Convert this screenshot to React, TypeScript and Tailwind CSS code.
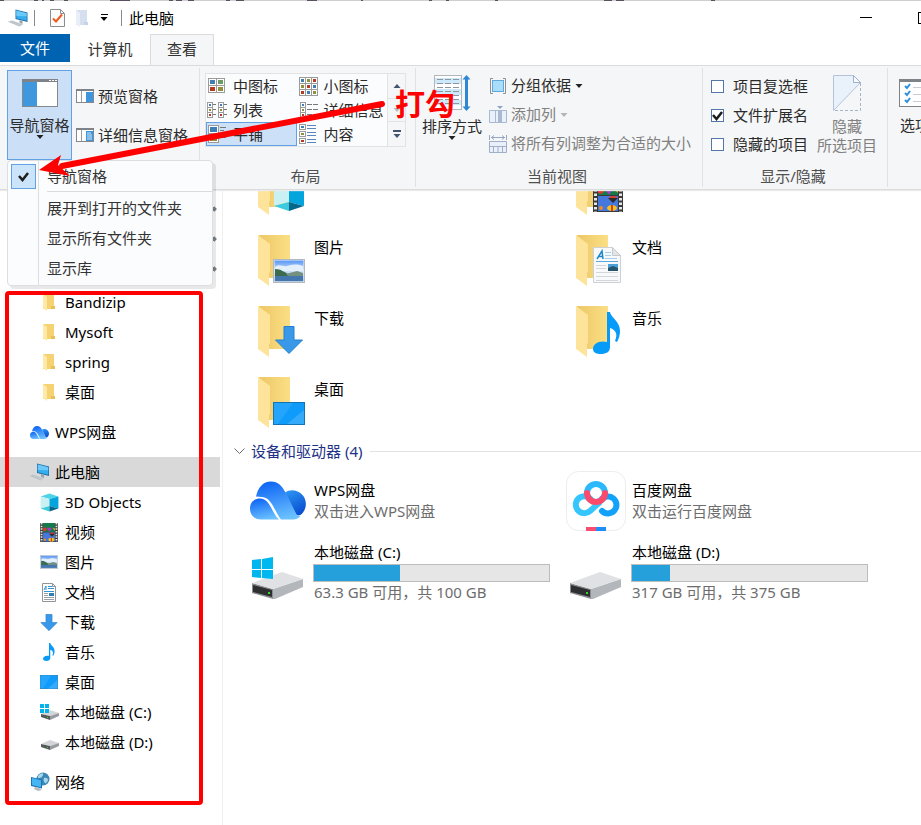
import type { ReactNode } from "react";

const FONT = "font-['Noto_Sans','Noto_Sans_CJK_SC',sans-serif]";

/* ---------- small icons ---------- */

function PcIcon({ className = "h-5 w-5" }: { className?: string }) {
  return (
    <svg viewBox="0 0 20 20" className={className} aria-hidden="true">
      <path d="M7 1.500l12 3v9.500L7 11z" fill="#1f6fa8" />
      <path d="M7.800 2.500l10.400 2.700v7.500L7.800 10.200z" fill="#35aef0" />
      <path d="M7.800 2.500l10.400 2.700v3L7.800 8z" fill="#6cc8f8" />
      <path d="M11 12l3 1v3l-3-1z" fill="#9aa3ab" />
      <path d="M0 13.500l4-1 11 4-4 2z" fill="#cfd5da" />
      <path d="M0 13.500l11 4.500M2 13l11 4" stroke="#aab2b9" strokeWidth="0.700" />
    </svg>
  );
}

function SmallFolder({ pale = false }: { pale?: boolean }) {
  return (
    <svg viewBox="0 0 18 18" className="h-[18px] w-[18px]" aria-hidden="true">
      <path d="M3 1h11v15H3z" fill={pale ? "#d5dfee" : "#f5d373"} />
      <path d="M11 13h4v3h-4z" fill={pale ? "#c6d3e8" : "#e8c05a"} />
      <path d="M3 1l4 3v14l-4-3z" fill={pale ? "#e9eff8" : "#ffe9a6"} />
    </svg>
  );
}

function WpsCloud({ className }: { className: string }) {
  return (
    <svg viewBox="0 0 56 38" className={className} aria-hidden="true">
      <defs>
        <linearGradient id="wpsA" x1="0.3" y1="0" x2="0.6" y2="1">
          <stop offset="0" stopColor="#0f66f5" />
          <stop offset="1" stopColor="#6cc2ff" />
        </linearGradient>
        <linearGradient id="wpsB" x1="0" y1="0" x2="0.5" y2="1">
          <stop offset="0" stopColor="#2f9bf5" />
          <stop offset="1" stopColor="#0a50d2" />
        </linearGradient>
      </defs>
      <path d="M35 11C41 7 48 9 52 13c5 5 5 13 1 18-2 3-5 4-7 2z" fill="url(#wpsB)" />
      <path d="M6 15C8 6 13 0 21 0c7 0 11 4 15 12l10 20c2 3 4 4 6 1-3 4-6 5-9 5H31C25 31 22 16 12 15.500z" fill="url(#wpsA)" />
      <path d="M0 27c0-6 4-10 10-10 10 0 12 15 19 21H11C4 38 0 33 0 27z" fill="url(#wpsA)" />
    </svg>
  );
}

function CubeIcon({ className = "h-[18px] w-[18px]" }: { className?: string }) {
  return (
    <svg viewBox="0 0 32 32" className={className} aria-hidden="true">
      <path d="M1 6L16 1l15 5-15 4z" fill="#4fd3e6" />
      <path d="M1 6l15 4v12L1 26z" fill="#c9f0f3" />
      <path d="M31 6l-15 4v12l15 4z" fill="#04a4dc" />
      <path d="M1 26l15-4v9z" fill="#3ccbdd" />
      <path d="M31 26l-15-4v9z" fill="#04678c" />
    </svg>
  );
}

function FilmIcon({ className = "h-[19px] w-[18px]" }: { className?: string }) {
  return (
    <svg viewBox="0 0 30 32" className={className} aria-hidden="true">
      <rect width="30" height="32" fill="#3a3a3a" />
      <rect x="5" width="20" height="15" fill="#157a4a" />
      <rect x="5" y="16" width="20" height="15" fill="#4478dc" />
      <path d="M5 8h6v4l-3 2-3-1z" fill="#d53a2a" />
      <path d="M11 8h9l-4 7z" fill="#a33ac4" />
      <path d="M21 9h4v4z" fill="#f0a51c" />
      <ellipse cx="20" cy="18" rx="4" ry="2" fill="#e33b26" />
      <path d="M15 18h10l-5 5z" fill="#2b2b2b" />
      <ellipse cx="19" cy="28" rx="5" ry="3" fill="#f6c21c" />
      <path d="M18 25h2v6h-2z" fill="#dc3a22" />
      <ellipse cx="8" cy="28" rx="2" ry="2" fill="#f08a1c" />
      <path d="M2.500 0v32M27.500 0v32" stroke="#e6e6e6" strokeWidth="3" strokeDasharray="2.500 2" />
    </svg>
  );
}

function PhotoIcon({ className }: { className: string }) {
  return (
    <svg viewBox="0 0 32 24" preserveAspectRatio="none" className={className} aria-hidden="true">
      <defs>
        <linearGradient id="sky" x1="0" y1="0" x2="0" y2="1">
          <stop offset="0" stopColor="#5a97f5" />
          <stop offset="0.5" stopColor="#cfe3fa" />
          <stop offset="1" stopColor="#7fa5cf" />
        </linearGradient>
      </defs>
      <rect x="0.500" y="0.500" width="31" height="23" fill="#eef1f4" stroke="#b3b9c0" />
      <rect x="1.500" y="1.500" width="29" height="21" fill="url(#sky)" />
      <path d="M2 8c4-4 8 0 12-1s8-3 16 0v5H2z" fill="#e3effb" />
      <path d="M2 10c6 0 9 3 15 6h13v2H2z" fill="#3c6b4e" />
      <path d="M13 15l11-3 6 2v3H15z" fill="#74907f" />
      <path d="M2 17h28v5H2z" fill="#4377ad" />
    </svg>
  );
}

/* Folder badge version: soft outline and a thumbnail. */
function DocIcon({ className }: { className: string }) {
  return (
    <svg viewBox="0 0 28 36" className={className} aria-hidden="true">
      <path d="M0.500 0.500h19l8 8v27H0.500z" fill="#f8f9fa" stroke="#cdd1d5" />
      <path d="M19.500 0.500v8h8z" fill="#e2e5e8" stroke="#c5c9cd" />
      <path d="M4 12L9 4l1 8M5.500 9.500H10" fill="none" stroke="#1b87c9" strokeWidth="1.500" />
      <path d="M12 5.500h6M12 8.500h6M12 11.500h12" stroke="#a3d0ec" />
      <path d="M3 14.500h22" stroke="#5aa9dd" />
      <path d="M3 18.500h10M3 21.500h10M3 25.500h22M3 29.500h22M3 33.500h22" stroke="#d3d7da" />
      <rect x="15" y="17" width="10" height="7" fill="#4ba0d8" />
      <path d="M15 21l5-2 5 2v3H15z" fill="#25566b" />
    </svg>
  );
}

function SmallDoc() {
  return (
    <svg viewBox="0 0 18 19" className="h-[19px] w-[18px]" aria-hidden="true">
      <path d="M2.500 0.500h10l3 3v15h-13z" fill="#fff" stroke="#8f959b" />
      <path d="M12.500 0.500v3h3" fill="none" stroke="#8f959b" />
      <path d="M4 7l2-4v4M8 3.500h4M8 5.500h6M4 8.500h10" fill="none" stroke="#2f93d4" />
      <path d="M4 10.500h4M4 12.500h4M4 14.500h10M4 16.500h10" stroke="#9aa0a6" />
      <rect x="9" y="10" width="5" height="3" fill="#2d7fb3" />
    </svg>
  );
}

function ArrowDownIcon({ className }: { className: string }) {
  return (
    <svg viewBox="0 0 28 28" className={className} aria-hidden="true">
      <path d="M9 0.500h10V14h8.500L14 27.500 0.500 14H9z" fill="#3a98e8" stroke="#2480cf" />
    </svg>
  );
}

function NoteIcon({ className = "h-[18px] w-[18px]" }: { className?: string }) {
  return (
    <svg viewBox="0 0 28 42" className={className} aria-hidden="true">
      <path
        d="M14 0h3c1 6 10 9 10 19 0 4-1 7-3 11l-2-1c3-7 1-11-5-13v19c0 5-4 7-9 7-4 0-8-1-8-5 0-5 6-9 14-7z"
        fill="#069bf8"
      />
    </svg>
  );
}

function DesktopIcon({ className }: { className: string }) {
  return (
    <svg viewBox="0 0 32 23" preserveAspectRatio="none" className={className} aria-hidden="true">
      <rect x="0.500" y="0.500" width="31" height="22" fill="#0f9bfa" stroke="#1273b5" />
      <path d="M1 1h19L5 22H1z" fill="#24a5fb" />
      <path d="M31 8v14H14z" fill="#34aafb" />
    </svg>
  );
}

function DriveIcon({ className, windows = false }: { className: string; windows?: boolean }) {
  return (
    <svg viewBox="0 0 54 44" className={className} aria-hidden="true">
      <path d="M22 32l30-10v8L24 42h-2z" fill="#b3b6ba" />
      <path d="M1 26l21 6v10L1 36z" fill="#8b8e91" />
      <path d="M2 28l19 5v7L2 35z" fill="#2d2f31" />
      <path d="M1 26l30-11 21 7-30 10z" fill="#dfe1e4" />
      <rect x="17" y="35" width="2" height="2" fill="#35d82b" />
      {windows && <path d="M1 3l9-1v10H1zM11 2l11-2v12H11zM1 13h9v8l-9-1zM11 13h11v9l-11-1z" fill="#00b7f0" />}
    </svg>
  );
}

function SmallDrive({ windows = false }: { windows?: boolean }) {
  return (
    <svg viewBox="0 0 20 16" className="h-4 w-5" aria-hidden="true">
      <path d="M1 10l9-4 9 3-9 3z" fill="#d3d5d8" />
      <path d="M10 12l9-3v3l-9 4z" fill="#989b9f" />
      <path d="M1 10l9 2v4l-9-3z" fill="#55585b" />
      <rect x="7" y="13" width="1" height="1" fill="#35d82b" />
      {windows && <path d="M0 0h4v4H0zM5 0h4v4H5zM0 5h4v4H0zM5 5h4v4H5z" fill="#00b4ee" />}
    </svg>
  );
}

function NetworkIcon() {
  return (
    <svg viewBox="0 0 20 20" className="h-5 w-5" aria-hidden="true">
      <circle cx="13" cy="7" r="6.500" fill="#3b87b5" />
      <path d="M8 4c3-4 6-3 5-1s-1 3-5 3zM14 6c3-1 4 1 4 2s-2 4-3 3-2-3-1-5z" fill="#a7d7ea" />
      <path d="M1 5l11 2.500v9L1 14z" fill="#1c74b5" />
      <path d="M2 6l9 2.200v7L2 13z" fill="#45b4f2" />
      <path d="M5 15l4 1 3 2-4 1-4-2z" fill="#b4bbc1" />
    </svg>
  );
}

function BaiduIcon() {
  return (
    <svg viewBox="0 0 60 60" className="h-[60px] w-[60px]" aria-hidden="true">
      <rect x="0.500" y="0.500" width="59" height="59" rx="12" fill="#fff" stroke="#ededed" />
      <g fill="none" strokeWidth="6">
        <circle cx="30" cy="22" r="9" stroke="#2bb9fb" />
        <path d="M26 30a8.500 8.500 0 1 0-2 10l10-9" stroke="#36c6fd" />
        <path d="M35 29a8.500 8.500 0 1 1 1 11" stroke="#12a2fb" strokeLinecap="round" />
        <path d="M21 22a9 9 0 1 0 18 0" stroke="#fd4a6c" strokeLinecap="round" />
      </g>
      <path d="M20 56h10v4H20z" fill="#fb4b70" />
      <path d="M30 56h10v4H30z" fill="#1e8dfb" />
    </svg>
  );
}

function BigFolder({ children }: { children: ReactNode }) {
  return (
    <span className="grid h-13 w-12 shrink-0">
      <svg viewBox="0 0 48 52" className="col-start-1 row-start-1 h-13 w-12" aria-hidden="true">
        <defs>
          <linearGradient id="fold" x1="0" y1="0" x2="1" y2="0">
            <stop offset="0" stopColor="#ecc765" />
            <stop offset="1" stopColor="#fbdf85" />
          </linearGradient>
        </defs>
        <path d="M1 0h31v43H12L1 40z" fill="url(#fold)" />
        <path d="M0 0l12 9v28l-1 1v13L0 43z" fill="#fee49a" />
      </svg>
      <span className="col-start-1 row-start-1 flex items-end justify-end pr-px pb-1">{children}</span>
    </span>
  );
}

/* ---------- ribbon icons ---------- */

function PaneIcon({ variant }: { variant: "preview" | "details" }) {
  return (
    <svg viewBox="0 0 18 14" className="h-3.5 w-[18px]" aria-hidden="true">
      <rect x="0.500" y="0.500" width="17" height="13" fill="#fff" stroke="#85888c" />
      <path d="M0 0h18v2H0z" fill="#7f8286" />
      <path d="M5.500 2v11" stroke="#9a9da0" />
      <rect x="10" y="3" width="7" height="10" fill="#3c95dd" />
      {variant === "details" && <path d="M11 5h4M11 7h5M11 9h5M11 11h5" stroke="#fff" strokeWidth="0.800" />}
    </svg>
  );
}

function Thumb({ x, y, w, h, c }: { x: number; y: number; w: number; h: number; c: string }) {
  return (
    <g>
      <rect x={x + 0.5} y={y + 0.5} width={w - 1} height={h - 1} fill="#fff" stroke="#9b9b9b" />
      <rect x={x + 2} y={y + 2} width={w - 4} height={h - 4} fill={c} />
    </g>
  );
}

const BLUE = "#3f7fb5";
const OLIVE = "#8f8f3d";
const RED = "#b53a20";
const ROW_COLORS = [BLUE, OLIVE, RED];

function ViewIcon({ kind }: { kind: string }) {
  return (
    <svg viewBox="0 0 20 20" className="h-5 w-5 shrink-0" aria-hidden="true">
      {kind === "medium" && (
        <>
          <Thumb x={1} y={2} w={9} h={8} c={BLUE} />
          <Thumb x={9} y={2} w={9} h={8} c="#6d9a63" />
          <Thumb x={1} y={9} w={9} h={8} c={RED} />
          <Thumb x={9} y={9} w={9} h={8} c={OLIVE} />
        </>
      )}
      {kind === "small" &&
        [0, 1, 2].map((r) =>
          [0, 1, 2].map((c) => (
            <Thumb key={`${r}${c}`} x={c * 6 + 1} y={r * 6 + 1} w={7} h={7} c={ROW_COLORS[(r + c) % 3]} />
          )),
        )}
      {kind === "list" &&
        [0, 1, 2].map((r) => (
          <g key={r}>
            <Thumb x={0} y={r * 5 + 2} w={6} h={6} c={ROW_COLORS[r]} />
            <Thumb x={11} y={r * 5 + 2} w={6} h={6} c={ROW_COLORS[r]} />
            <path d={`M6 ${r * 5 + 4.5}h3M17 ${r * 5 + 4.5}h3`} stroke="#777" />
          </g>
        ))}
      {kind === "details" &&
        [0, 1, 2].map((r) => (
          <g key={r}>
            <Thumb x={2} y={r * 5 + 2} w={6} h={6} c={ROW_COLORS[r]} />
            <path d={`M9 ${r * 5 + 4.5}h5M15 ${r * 5 + 4.5}h5`} stroke="#777" />
          </g>
        ))}
      {kind === "tiles" && (
        <>
          <Thumb x={1} y={1} w={11} h={9} c={BLUE} />
          <Thumb x={1} y={10} w={11} h={9} c={OLIVE} />
          <path d="M13 3.500h6M13 6.500h4M13 13.500h6" stroke="#777" />
        </>
      )}
      {kind === "content" &&
        [0, 1, 2].map((r) => (
          <g key={r}>
            <Thumb x={1} y={r * 7} w={7} h={6} c={ROW_COLORS[r]} />
            <path d={`M9 ${r * 7 + 1.5}h9M9 ${r * 7 + 4.5}h9`} stroke="#5b86bd" />
          </g>
        ))}
    </svg>
  );
}

function Caret({ className = "text-[#222]" }: { className?: string }) {
  return (
    <svg viewBox="0 0 8 4" className={`h-1 w-2 shrink-0 ${className}`} aria-hidden="true">
      <path d="M0.500 0h7L4 4z" fill="currentColor" />
    </svg>
  );
}

function Tick() {
  return (
    <svg viewBox="0 0 13 13" className="pointer-events-none col-start-1 row-start-1 h-[13px] w-[13px]" aria-hidden="true">
      <path d="M2 6l3.500 4L11 3" fill="none" stroke="#1c1c1c" strokeWidth="2.500" />
    </svg>
  );
}

/* ---------- ribbon pieces ---------- */

function Group({ label, className, children }: { label: string; className: string; children: ReactNode }) {
  return (
    <section className={`flex shrink-0 flex-col border-r border-[#dfe1e4] ${className}`}>
      <div className="flex h-[98px] items-start">{children}</div>
      <h2 className="pr-1 text-center leading-5 text-[#505050]">{label}</h2>
    </section>
  );
}

function GalleryItem({ kind, label, active = false }: { kind: string; label: string; active?: boolean }) {
  return (
    <button
      className={`flex h-6 items-center gap-1.5 border whitespace-nowrap ${active ? "border-[#62a2e4] bg-[#cce1f8]" : "border-transparent"}`}
    >
      <ViewIcon kind={kind} />
      {label}
    </button>
  );
}

function CheckRow({ label, checked = false }: { label: string; checked?: boolean }) {
  return (
    <label className="flex h-[29px] items-center gap-[9px]">
      <span className="grid h-[13px] w-[13px]">
        <input
          type="checkbox"
          defaultChecked={checked}
          className="col-start-1 row-start-1 h-[13px] w-[13px] appearance-none border border-[#5576a8] bg-white"
        />
        {checked && <Tick />}
      </span>
      {label}
    </label>
  );
}

function NavMenu() {
  return (
    <div
      role="menu"
      className="absolute top-full left-0 z-20 flex h-[126px] w-[206px] rounded-sm border border-[#dcdee1] bg-[#fbfcfe] text-[#333] shadow-[3px_3px_0_rgba(0,0,0,0.09)]"
    >
      <div className="w-[31px] shrink-0 border-r border-[#dcdee1] py-[3px] pl-[3px]">
        <span className="grid h-[25px] w-[25px] place-items-center border border-[#62a2e4] bg-[#cce4fa]">
          <Tick />
        </span>
      </div>
      <div className="flex flex-1 flex-col pl-2">
        <button role="menuitemcheckbox" aria-checked="true" className="h-[30px] text-left">导航窗格</button>
        <hr className="mb-px border-[#d9dbde]" />
        <button role="menuitem" className="h-[30px] text-left">展开到打开的文件夹</button>
        <button role="menuitem" className="h-[30px] text-left">显示所有文件夹</button>
        <button role="menuitem" className="h-[30px] text-left">显示库</button>
      </div>
    </div>
  );
}

function Ribbon() {
  return (
    <div className="relative z-10 flex h-[125px] border-y border-[#dadbdc] bg-[#f5f6f7] py-0.5 text-[#2b2b2b] shadow-[0_1px_1px_#ebebeb]">
      <section className="flex w-50 shrink-0 border-r border-[#dfe1e4] pt-0.5 pl-[7px]">
        <div className="relative h-[90px] w-[65px] shrink-0">
          <button className="flex h-full w-full flex-col items-center border border-[#62a2e4] bg-[#cbe0f7] pt-2 whitespace-nowrap">
            <svg viewBox="0 0 36 28" className="h-7 w-9 shrink-0" aria-hidden="true">
              <rect x="0.500" y="0.500" width="35" height="27" fill="#fff" stroke="#85888c" />
              <path d="M0 0h36v3H0z" fill="#7f8286" />
              <path d="M27 1.500h2M30 1.500h2M33 1.500h2" stroke="#fff" />
              <path d="M1 3h14v24H1z" fill="#3f97dd" />
            </svg>
            <span className="mt-2 leading-5">导航窗格</span>
            <Caret />
          </button>
          <NavMenu />
        </div>
        <div className="ml-1 flex flex-col gap-[9px] pt-[11px] whitespace-nowrap">
          <button className="flex h-[30px] items-center gap-1"><PaneIcon variant="preview" />预览窗格</button>
          <button className="flex h-[30px] items-center gap-1"><PaneIcon variant="details" />详细信息窗格</button>
        </div>
      </section>

      <Group label="布局" className="w-54">
        <div className="mt-[5px] ml-[5px] flex border border-[#e1e3e6] bg-[#fbfcfe]">
          <div className="grid w-[181px] grid-cols-2">
            <GalleryItem kind="medium" label="中图标" />
            <GalleryItem kind="small" label="小图标" />
            <GalleryItem kind="list" label="列表" />
            <GalleryItem kind="details" label="详细信息" />
            <GalleryItem kind="tiles" label="平铺" active />
            <GalleryItem kind="content" label="内容" />
          </div>
          <div className="flex w-[18px] flex-col border-l border-[#e1e3e6] bg-[#f5f6f7]">
            <button aria-label="向上滚动" className="grid h-6 place-items-center"><Caret className="rotate-180 text-[#42536e]" /></button>
            <button aria-label="向下滚动" className="grid h-6 place-items-center border-y border-[#e1e3e6]"><Caret className="text-[#b5bcc6]" /></button>
            <button aria-label="更多布局" className="flex h-6 flex-col items-center justify-center gap-0.5">
              <span className="h-0.5 w-2 bg-[#42536e]" />
              <Caret className="text-[#42536e]" />
            </button>
          </div>
        </div>
      </Group>

      <Group label="当前视图" className="w-[287px]">
        <button className="ml-[5px] flex w-[62px] shrink-0 flex-col items-center pt-[7px] whitespace-nowrap">
          <svg viewBox="0 0 38 36" className="h-9 w-[38px] shrink-0" aria-hidden="true">
            <rect x="1.500" y="0.500" width="27" height="34" fill="#fff" stroke="#b3b6ba" />
            <path d="M2 3h26v6H2zM2 14h26v6H2zM2 25h26v5H2z" fill="#cdeafa" />
            <path
              d="M4 4.500h6M12 4.500h6M20 4.500h6M4 8.500h6M12 8.500h6M20 8.500h6M4 12.500h6M12 12.500h6M20 12.500h6M4 16.500h6M12 16.500h6M20 16.500h6M4 20.500h6M12 20.500h6M20 20.500h6M4 24.500h6M12 24.500h6M20 24.500h6M4 28.500h6M12 28.500h6M20 28.500h6"
              stroke="#8f979e"
            />
            <path d="M33.500 0l4 4.500h-2.500v27h2.500l-4 4.500-4-4.500H32v-27h-2.500z" fill="#2f86d3" />
          </svg>
          <span className="mt-[5px] leading-5">排序方式</span>
          <Caret />
        </button>
        <div className="ml-1.5 flex flex-col pt-[3px] whitespace-nowrap">
          <button className="flex h-[29px] items-center gap-1">
            <svg viewBox="0 0 18 18" className="h-[18px] w-[18px]" aria-hidden="true">
              <path d="M4 1.500H1.500v15H4M14 1.500h2.500v15H14" fill="none" stroke="#8b9097" />
              <rect x="3.500" y="3.500" width="11" height="11" fill="#aadcfb" stroke="#5fa8dd" />
            </svg>
            分组依据
            <Caret />
          </button>
          <button className="flex h-[29px] items-center gap-1 text-[#808080]">
            <svg viewBox="0 0 18 18" className="h-[18px] w-[18px]" aria-hidden="true">
              <path d="M0.500 4.500h17v12H0.500zM6.500 4.500v12M12.500 4.500v12" fill="#e9f0fa" stroke="#a9b9d2" />
              <path d="M9 5h3v11H9z" fill="#a9b9d2" />
              <path d="M8 0h6l-3 3z" fill="#8ea2c2" />
            </svg>
            添加列
            <Caret className="text-[#b5b5b5]" />
          </button>
          <button className="flex h-[29px] items-center gap-1 text-[#808080]">
            <svg viewBox="0 0 18 18" className="h-[18px] w-[18px]" aria-hidden="true">
              <path d="M0.500 0v5M17.500 0v5M2 2.500h14M5 0.500l-2.500 2L5 4.500M13 0.500l2.500 2-2.500 2" fill="none" stroke="#97a7c0" />
              <path d="M0.500 6.500h17v11H0.500zM0.500 11.500h17M4.500 11.500v6M9 11.500v6M13.500 11.500v6" fill="#e9f0fa" stroke="#a0afc7" />
            </svg>
            将所有列调整为合适的大小
          </button>
        </div>
      </Group>

      <Group label="显示/隐藏" className="w-[185px]">
        <div className="ml-2 flex shrink-0 flex-col pt-1 whitespace-nowrap">
          <CheckRow label="项目复选框" />
          <CheckRow label="文件扩展名" checked />
          <CheckRow label="隐藏的项目" />
        </div>
        <button className="ml-[9px] flex shrink-0 flex-col items-center pt-[7px] leading-[19px] whitespace-nowrap text-[#808080]">
          <svg viewBox="0 0 28 36" className="mb-1.5 h-9 w-7" aria-hidden="true">
            <path d="M0.500 0.500h20l7 7L0.500 35.500z" fill="#e9f1fb" stroke="#b4c3da" />
            <path d="M20.500 0.500v7h7z" fill="#f7fafe" stroke="#9db0cd" />
            <path d="M27.500 8v27.500H1" fill="none" stroke="#a7b4c8" strokeDasharray="3 2" />
          </svg>
          <span>隐藏</span>
          <span>所选项目</span>
        </button>
      </Group>

      <button className="ml-[11px] flex shrink-0 flex-col items-start pt-[11px] whitespace-nowrap">
        <svg viewBox="0 0 36 28" className="h-7 w-9" aria-hidden="true">
          <rect x="0.500" y="0.500" width="35" height="27" fill="#fff" stroke="#7f8286" />
          <path d="M0 0h36v3H0z" fill="#7f8286" />
          <path d="M6 7l2 2 3-4M6 14l2 2 3-4M6 21l2 2 3-4" fill="none" stroke="#2f8fdd" strokeWidth="2" />
          <path d="M14 8.500h18M14 15.500h18M14 22.500h18" stroke="#c9ccd0" />
        </svg>
        <span className="mt-2 ml-px leading-5">选项</span>
      </button>
    </div>
  );
}

/* ---------- body ---------- */

function NavItem({ icon, label, top = false, selected = false }: { icon: ReactNode; label: string; top?: boolean; selected?: boolean }) {
  return (
    <a href="#" className={`flex h-[30px] items-center ${top ? "pl-[30px]" : "pl-10"} ${selected ? "bg-[#d9d9d9]" : ""}`}>
      <span className="flex w-[25px] items-center">{icon}</span>
      {label}
    </a>
  );
}

function Sidebar() {
  return (
    <nav className="w-[223px] shrink-0 border-r border-[#f0f0f0] pt-1">
      <div className="mr-0.5 mb-[3px] flex flex-col items-end">
        {[0, 1, 2].map((i) => (
          <span key={i} className="flex h-[30px] items-center pr-[3px]">
            <svg viewBox="0 0 10 8" className="h-2 w-[10px]" aria-hidden="true">
              <path d="M0 4h4V1l2 1h1V1l3 3-3 3V6H6L4 7z" fill="#7b838c" />
            </svg>
          </span>
        ))}
      </div>
      <div className="mr-0.5 flex flex-col gap-2.5">
        <div>
          <NavItem icon={<SmallFolder />} label="Bandizip" />
          <NavItem icon={<SmallFolder />} label="Mysoft" />
          <NavItem icon={<SmallFolder />} label="spring" />
          <NavItem icon={<SmallFolder />} label="桌面" />
        </div>
        <NavItem top icon={<WpsCloud className="h-[13px] w-[19px]" />} label="WPS网盘" />
        <div>
          <NavItem top selected icon={<PcIcon />} label="此电脑" />
          <NavItem icon={<CubeIcon className="h-[19px] w-[19px]" />} label="3D Objects" />
          <NavItem icon={<FilmIcon />} label="视频" />
          <NavItem icon={<PhotoIcon className="h-3.5 w-[18px]" />} label="图片" />
          <NavItem icon={<SmallDoc />} label="文档" />
          <NavItem icon={<ArrowDownIcon className="h-[17px] w-[18px]" />} label="下载" />
          <NavItem icon={<NoteIcon />} label="音乐" />
          <NavItem icon={<DesktopIcon className="h-3.5 w-[18px]" />} label="桌面" />
          <NavItem icon={<SmallDrive windows />} label="本地磁盘 (C:)" />
          <NavItem icon={<SmallDrive />} label="本地磁盘 (D:)" />
        </div>
        <NavItem top icon={<NetworkIcon />} label="网络" />
      </div>
    </nav>
  );
}

function FolderTile({ label, children }: { label: string; children: ReactNode }) {
  return (
    <a href="#" className="flex h-[71px] gap-2 pl-[15px]">
      <BigFolder>{children}</BigFolder>
      <span className="pt-0.5 leading-5">{label}</span>
    </a>
  );
}

function DriveTile({ icon, name, used, detail }: { icon: ReactNode; name: string; used: number; detail: string }) {
  return (
    <a href="#" className="flex h-[62px] leading-5">
      <span className="flex w-[70px] shrink-0 pt-[15px] pl-2">{icon}</span>
      <span className="flex w-[237px] flex-col">
        <span className="pl-px">{name}</span>
        <span className="mt-0.5 h-[18px] border border-[#bcbcbc] bg-[#e6e6e6]">
          <span className="block h-full bg-[#26a0da]" style={{ width: `${used}%` }} />
        </span>
        <span className="pl-px text-[#6d6d6d]">{detail}</span>
      </span>
    </a>
  );
}

function AppTile({ icon, name, detail }: { icon: ReactNode; name: string; detail: string }) {
  return (
    <a href="#" className="flex h-[71px]">
      <span className="w-[71px] shrink-0">{icon}</span>
      <span className="flex flex-col pt-[9px] leading-[21px]">
        <span>{name}</span>
        <span className="text-[#6d6d6d]">{detail}</span>
      </span>
    </a>
  );
}

function Content() {
  return (
    <main className="min-w-0 flex-1 pl-5">
      <div className="grid h-[26px] grid-cols-[318px_318px] overflow-hidden">
        <span className="flex h-[26px] items-end pl-[15px]"><BigFolder><CubeIcon className="h-8 w-8" /></BigFolder></span>
        <span className="flex h-[26px] items-end pl-[15px]"><BigFolder><FilmIcon className="h-8 w-[30px]" /></BigFolder></span>
      </div>
      <div className="mt-[19px] grid grid-cols-[318px_318px]">
        <FolderTile label="图片"><PhotoIcon className="h-6 w-8" /></FolderTile>
        <FolderTile label="文档"><DocIcon className="mr-0.5 h-9 w-7" /></FolderTile>
        <FolderTile label="下载"><ArrowDownIcon className="mr-0.5 h-7 w-7" /></FolderTile>
        <FolderTile label="音乐"><NoteIcon className="mr-0.5 h-[42px] w-7" /></FolderTile>
        <FolderTile label="桌面"><DesktopIcon className="h-[23px] w-8" /></FolderTile>
      </div>
      <h2 className="-mt-[7px] -ml-2.5 flex h-5 items-center gap-1.5 leading-5 text-[#1e3287]">
        <svg viewBox="0 0 11 7" className="ml-px h-[7px] w-[11px]" aria-hidden="true">
          <path d="M0.500 0.500l5 5 5-5" fill="none" stroke="#6b6b6b" />
        </svg>
        设备和驱动器 (4)
        <span className="ml-0.5 h-px flex-1 bg-[#e2e2e2]" />
      </h2>
      <div className="mt-2.5 grid grid-cols-[318px_318px]">
        <AppTile
          icon={<span className="block pt-2.5 pl-[7px]"><WpsCloud className="h-[39px] w-14" /></span>}
          name="WPS网盘"
          detail="双击进入WPS网盘"
        />
        <AppTile icon={<span className="block pl-[5px]"><BaiduIcon /></span>} name="百度网盘" detail="双击运行百度网盘" />
        <DriveTile icon={<DriveIcon windows className="h-11 w-[54px]" />} name="本地磁盘 (C:)" used={36.7} detail="63.3 GB 可用，共 100 GB" />
        <DriveTile icon={<DriveIcon className="h-11 w-[54px]" />} name="本地磁盘 (D:)" used={16} detail="317 GB 可用，共 375 GB" />
      </div>
    </main>
  );
}

/* ---------- window ---------- */

export default function App() {
  return (
    <div className={`relative flex min-h-screen flex-col overflow-hidden bg-white text-[15px] text-black ${FONT}`}>
      <svg viewBox="0 0 921 1" preserveAspectRatio="xMinYMin slice" className="h-px w-full bg-[#cfcfcf]" aria-hidden="true">
        <path
          d="M0 0.500h4M34 0.500h4M42 0.500h2M50 0.500h4M64 0.500h4M110 0.500h20M169 0.500h4M176 0.500h6M188 0.500h6M226 0.500h4M236 0.500h8M307 0.500h10M361 0.500h2M429 0.500h3M446 0.500h3M495 0.500h3M604 0.500h8M616 0.500h8M711 0.500h4"
          stroke="#5a5260"
        />
      </svg>
      <header className="flex h-[33px] items-center pl-2 leading-5">
        <PcIcon className="h-5 w-[21px]" />
        <span className="ml-[5px] h-4 w-px bg-[#8a8a8a]" />
        <button aria-label="属性" className="ml-[15px]">
          <svg viewBox="0 0 15 18" className="h-[18px] w-[15px]" aria-hidden="true">
            <path d="M0.500 0.500h10l4 4v13h-14z" fill="#fbfbfb" stroke="#8d8d8d" />
            <path d="M10.500 0.500v4h4" fill="none" stroke="#8d8d8d" />
            <path d="M3 9.500l3 3 6-7" fill="none" stroke="#ee5a1c" strokeWidth="2" />
          </svg>
        </button>
        <button aria-label="新建文件夹" className="ml-2"><SmallFolder pale /></button>
        <button aria-label="自定义快速访问工具栏" className="ml-[9px] flex flex-col items-center gap-0.5">
          <span className="h-px w-[7px] bg-black" />
          <Caret className="text-black" />
        </button>
        <span className="ml-[13px] h-4 w-px bg-[#8a8a8a]" />
        <h1 className="ml-[7px]">此电脑</h1>
        <span className="flex-1" />
        <button aria-label="最小化" className="flex h-8 w-12 items-center justify-center"><span className="h-px w-3 bg-black" /></button>
        <button aria-label="最大化" className="-mr-[9px] ml-7 h-3 w-3 shrink-0 border border-black" />
      </header>

      <div className="flex h-[31px] leading-5" role="tablist">
        <button role="tab" className="h-7 w-[70px] bg-[#0063b1] text-white">文件</button>
        <button role="tab" className="h-[30px] w-20 text-[#333]">计算机</button>
        <button role="tab" aria-selected="true" className="h-[31px] w-16 border border-b-0 border-[#dadbdc] bg-[#f5f6f7] pb-0.5 text-[#333]">查看</button>
      </div>

      <Ribbon />

      <div className="flex flex-1">
        <Sidebar />
        <Content />
      </div>

      <svg viewBox="0 0 400 110" className="pointer-events-none absolute top-[90px] left-0 z-30 h-[110px] w-[400px]" aria-hidden="true">
        <path d="M382 14L62 76" stroke="#f00" strokeWidth="6" strokeLinecap="round" />
        <path d="M39 80L61 65l-3 10 12 11z" fill="#f00" />
      </svg>
      <strong className="pointer-events-none absolute top-[84px] left-[395px] z-30 text-[30px] leading-10 font-bold text-[#f00]">打勾</strong>
      <div className="pointer-events-none absolute top-[291px] left-[5px] z-30 h-[514px] w-[198px] rounded-sm border-4 border-[#f00]" />
    </div>
  );
}
